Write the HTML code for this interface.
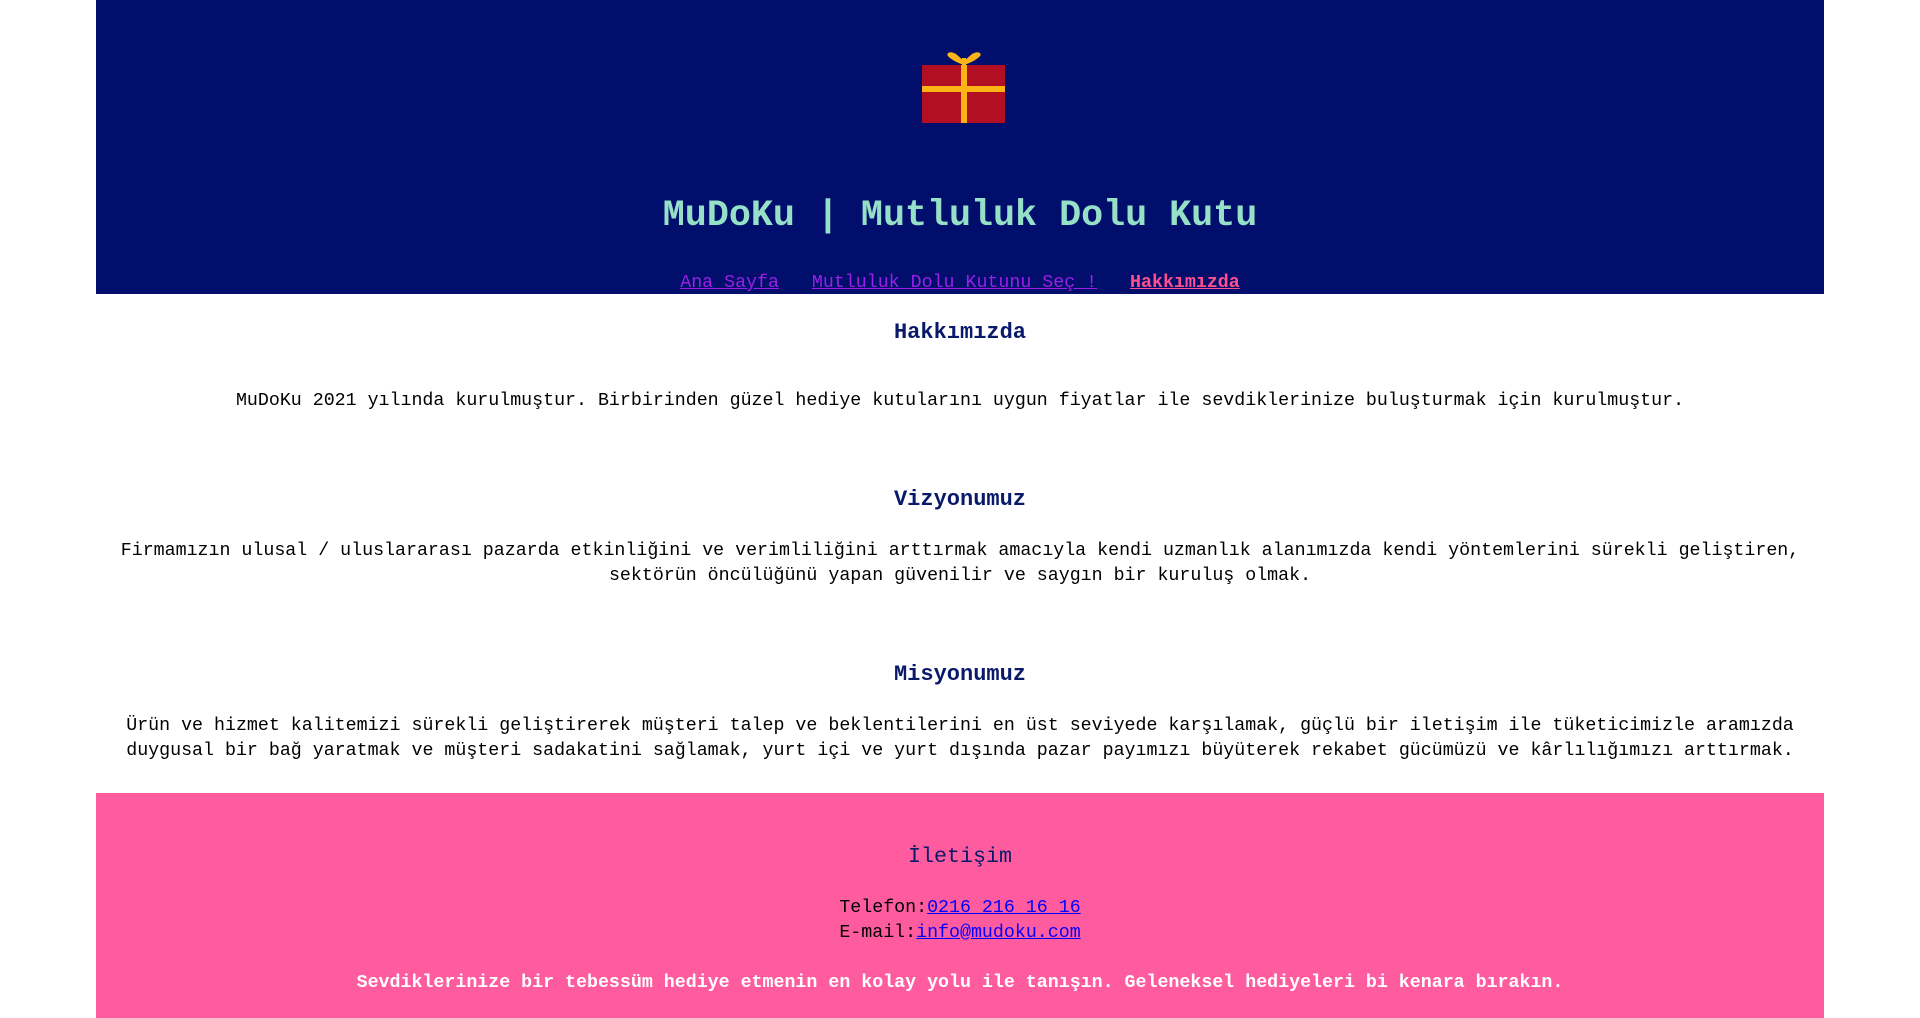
<!DOCTYPE html>
<html><head><meta charset="utf-8"><style>
html,body{margin:0;padding:0;width:1920px;height:1018px;background:#fff;overflow:hidden;font-family:"Liberation Mono","DejaVu Sans Mono",monospace;}
.a{position:absolute;left:96px;width:1728px;text-align:center;white-space:nowrap;}
#hd{position:absolute;left:96px;top:0;width:1728px;height:294px;background:#020e6b;}
#ft{position:absolute;left:96px;top:793px;width:1728px;height:225px;background:#ff5c9f;}
.p{font-size:18.3px;color:#000;line-height:24.5px;}
.h{font-size:22px;font-weight:bold;color:#0a1a6b;}
</style></head><body>
<div id="hd"></div>
<div id="ft"></div>
<svg style="position:absolute;left:900px;top:40px" width="120" height="100" viewBox="900 40 120 100">
<rect x="922" y="65" width="83" height="58" fill="#b30f22"/>
<rect x="961" y="65" width="6" height="58" fill="#fbb316"/>
<rect x="922" y="86" width="83" height="6" fill="#fbb316"/>
<path d="M964 65 Q955 62 950 58 Q946 55 948 53 Q951 51 956 54 L964 61 L972 54 Q977 51 980 53 Q982 55 978 58 Q973 62 964 65 Z" fill="#fbb316"/>
<rect x="962" y="58" width="4" height="8" fill="#fbb316"/>
</svg>
<div class="a" style="top:193px;font-size:36.7px;font-weight:bold;color:#96e0c8;line-height:46px;">MuDoKu | Mutluluk Dolu Kutu</div>
<div class="a" style="top:271px;font-size:18.3px;line-height:24px;">
<span style="color:#9b1fe8;text-decoration:underline;">Ana Sayfa</span>&nbsp;&nbsp;&nbsp;<span style="color:#9b1fe8;text-decoration:underline;">Mutluluk Dolu Kutunu Seç !</span>&nbsp;&nbsp;&nbsp;<span style="color:#ff4f8f;text-decoration:underline;font-weight:bold;">Hakkımızda</span></div>
<div class="a h" style="top:320px;">Hakkımızda</div>
<div class="a p" style="top:389px;">MuDoKu 2021 yılında kurulmuştur. Birbirinden güzel hediye kutularını uygun fiyatlar ile sevdiklerinize buluşturmak için kurulmuştur.</div>
<div class="a h" style="top:487px;">Vizyonumuz</div>
<div class="a p" style="top:539px;">Firmamızın ulusal / uluslararası pazarda etkinliğini ve verimliliğini arttırmak amacıyla kendi uzmanlık alanımızda kendi yöntemlerini sürekli geliştiren,<br>sektörün öncülüğünü yapan güvenilir ve saygın bir kuruluş olmak.</div>
<div class="a h" style="top:662px;">Misyonumuz</div>
<div class="a p" style="top:714px;">Ürün ve hizmet kalitemizi sürekli geliştirerek müşteri talep ve beklentilerini en üst seviyede karşılamak, güçlü bir iletişim ile tüketicimizle aramızda<br>duygusal bir bağ yaratmak ve müşteri sadakatini sağlamak, yurt içi ve yurt dışında pazar payımızı büyüterek rekabet gücümüzü ve kârlılığımızı arttırmak.</div>
<div class="a" style="top:843px;font-size:21.7px;color:#0a1a6b;line-height:28px;">İletişim</div>
<div class="a p" style="top:896px;">Telefon:<span style="color:#0000ff;text-decoration:underline;">0216 216 16 16</span><br>E-mail:<span style="color:#0000ff;text-decoration:underline;">info@mudoku.com</span></div>
<div class="a p" style="top:971px;color:#fff;font-weight:bold;">Sevdiklerinize bir tebessüm hediye etmenin en kolay yolu ile tanışın. Geleneksel hediyeleri bi kenara bırakın.</div>
</body></html>
